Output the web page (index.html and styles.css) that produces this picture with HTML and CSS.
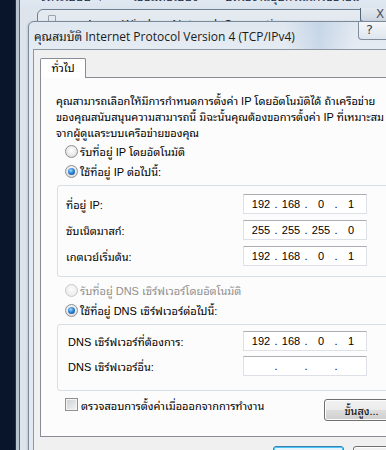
FILE: index.html
```html
<!DOCTYPE html>
<html lang="th">
<head>
<meta charset="utf-8">
<title>คุณสมบัติ Internet Protocol Version 4 (TCP/IPv4)</title>
<link rel="stylesheet" href="styles.css">
</head>
<body>
<div class="desk">
  <div class="explorer">
    <div class="ex-client">
      <div class="toolbar">
        <span class="tb-item tb-org">จัดระเบียบ ▼</span>
        <span class="tb-item tb-connect">เชื่อมต่อไปยัง</span>
        <span class="tb-item tb-disable">ปิดใช้งานอุปกรณ์เครือข่ายนี้</span>
      </div>
    </div>
  </div>

  <div class="wireless">
    <div class="wl-title">
      <span class="wl-icon"></span>
      <span class="wl-dot"></span>
      <span class="wl-net"></span>
      <span class="wl-name">Wireless Network Connection</span>
    </div>
    <div class="wl-close">X</div>
  </div>

  <div class="dialog">
    <div class="dlg-title">
      <span class="dlg-caption">คุณสมบัติ Internet Protocol Version 4 (TCP/IPv4)</span>
      <div class="help">?</div>
    </div>
    <div class="client">
      <div class="tabs"><div class="tab">ทั่วไป</div></div>
      <div class="page">
        <p class="intro">คุณสามารถเลือกให้มีการกำหนดการตั้งค่า IP โดยอัตโนมัติได้ ถ้าเครือข่าย<br>ของคุณสนับสนุนความสามารถนี้ มิฉะนั้นคุณต้องขอการตั้งค่า IP ที่เหมาะสม<br>จากผู้ดูแลระบบเครือข่ายของคุณ</p>

        <div class="opt"><span class="radio"></span><span>รับที่อยู่ IP โดยอัตโนมัติ</span></div>
        <div class="opt"><span class="radio checked"></span><span>ใช้ที่อยู่ IP ต่อไปนี้:</span></div>

        <div class="group group-ip">
          <div class="field-row"><span class="flabel">ที่อยู่ IP:</span>
            <div class="ipbox"><span class="seg">192</span><span class="dot">.</span><span class="seg">168</span><span class="dot">.</span><span class="seg">0</span><span class="dot">.</span><span class="seg">1</span></div></div>
          <div class="field-row"><span class="flabel">ซับเน็ตมาสก์:</span>
            <div class="ipbox"><span class="seg">255</span><span class="dot">.</span><span class="seg">255</span><span class="dot">.</span><span class="seg">255</span><span class="dot">.</span><span class="seg">0</span></div></div>
          <div class="field-row"><span class="flabel">เกตเวย์เริ่มต้น:</span>
            <div class="ipbox"><span class="seg">192</span><span class="dot">.</span><span class="seg">168</span><span class="dot">.</span><span class="seg">0</span><span class="dot">.</span><span class="seg">1</span></div></div>
        </div>

        <div class="opt opt-dns disabled"><span class="radio"></span><span>รับที่อยู่ DNS เซิร์ฟเวอร์โดยอัตโนมัติ</span></div>
        <div class="opt"><span class="radio checked"></span><span>ใช้ที่อยู่ DNS เซิร์ฟเวอร์ต่อไปนี้:</span></div>

        <div class="group group-dns">
          <div class="field-row"><span class="flabel">DNS เซิร์ฟเวอร์ที่ต้องการ:</span>
            <div class="ipbox"><span class="seg">192</span><span class="dot">.</span><span class="seg">168</span><span class="dot">.</span><span class="seg">0</span><span class="dot">.</span><span class="seg">1</span></div></div>
          <div class="field-row"><span class="flabel">DNS เซิร์ฟเวอร์อื่น:</span>
            <div class="ipbox"><span class="seg"></span><span class="dot">.</span><span class="seg"></span><span class="dot">.</span><span class="seg"></span><span class="dot">.</span><span class="seg"></span></div></div>
        </div>

        <div class="bottom-row">
          <label class="check-label"><span class="checkbox"></span><span>ตรวจสอบการตั้งค่าเมื่อออกจากการทำงาน</span></label>
          <button class="btn btn-adv" type="button">ขั้นสูง...</button>
        </div>
      </div>
      <div class="footer">
        <button class="btn btn-ok" type="button">ตกลง</button>
        <button class="btn btn-cancel" type="button">ยกเลิก</button>
      </div>
    </div>
  </div>
</div>
</body>
</html>
```

FILE: styles.css
```css
* { box-sizing: border-box; }

body {
  margin: 0;
  width: 386px;
  height: 450px;
  overflow: hidden;
  background: #0b182c;
  font-family: "Liberation Sans", "Noto Sans Thai Looped", "Noto Sans", sans-serif;
  font-size: 11px;
  color: #000;
}

.desk {
  position: relative;
  width: 386px;
  height: 450px;
  overflow: hidden;
  background: linear-gradient(90deg, #08152a 0%, #0f2039 100%);
}

/* background explorer window */
.explorer {
  position: absolute;
  left: 15px;
  top: -20px;
  width: 440px;
  height: 500px;
  border-left: 1px solid #28323e;
  padding-left: 3px;
  background: linear-gradient(90deg, #b7c3cf, #a3b0be);
}
.ex-client {
  height: 100%;
  border-left: 1px solid #566474;
  background: #dde4eb;
}
.toolbar {
  position: relative;
  height: 29px;
  background: linear-gradient(#e9eff6, #dbe4ee);
  color: #1c2d44;
  font-family: "Noto Sans", "Noto Sans Thai Looped", sans-serif;
  font-size: 12px;
  line-height: 16px;
  white-space: nowrap;
}
.tb-item { position: absolute; top: 9px; }
.tb-org { left: 20px; }
.tb-connect { left: 113px; }
.tb-disable { left: 205px; }

/* Wireless Network Connection window */
.wireless {
  position: absolute;
  left: 37px;
  top: 9px;
  width: 420px;
  height: 120px;
  border: 1px solid #6f7f90;
  border-radius: 6px 0 0 0;
  background: linear-gradient(#e4eaf0, #d7e0ea);
}
.wl-title {
  display: flex;
  align-items: center;
  height: 18px;
  padding-left: 10px;
  margin-top: 2px;
  font-family: "Noto Sans", "Liberation Sans", sans-serif;
  font-size: 12px;
  color: #1e1e1e;
  white-space: nowrap;
}
.wl-icon {
  flex: none;
  width: 8px;
  height: 9px;
  margin-top: -4px;
  border: 1px solid #98a3ae;
  border-radius: 1px;
}
.wl-dot {
  flex: none;
  width: 2px;
  height: 2px;
  margin-left: 33px;
  background: #555;
}
.wl-net {
  flex: none;
  width: 11px;
  height: 3px;
  margin-left: 15px;
  margin-right: 5px;
  margin-top: 4px;
  border-top: 2px solid #2f3f55;
  border-bottom: 1px solid #6a7a8d;
}
.wl-name { margin-top: 6px; }
.wl-close {
  position: absolute;
  left: 322px;
  top: -2px;
  width: 40px;
  height: 14px;
  border: 1px solid #55667a;
  border-top: none;
  border-radius: 0 0 0 3px;
  background: linear-gradient(#e3e9f0, #cdd7e2);
  font-family: "DejaVu Sans", sans-serif;
  font-size: 12px;
  line-height: 13px;
  padding-left: 15px;
  color: #4a5563;
}

/* Dialog */
.dialog {
  position: absolute;
  left: 28px;
  top: 21px;
  width: 430px;
  height: 450px;
  border: 1px solid #7a8a9b;
  border-radius: 6px 6px 0 0;
  background: linear-gradient(180deg, #dfe7f0 0px, #e6ecf2 30px, #e3e8ee 100%);
  box-shadow: -1px 0 2px rgba(0, 0, 0, 0.12);
}
.dlg-title {
  position: relative;
  height: 27px;
  padding-left: 5px;
  display: flex;
  align-items: center;
  background: linear-gradient(90deg, rgba(255,255,255,0) 0, rgba(255,255,255,0) 255px, rgba(150,180,215,0.35) 290px, rgba(255,255,255,0) 325px);
}
.dlg-caption {
  font-family: "Open Sans", "Noto Sans Thai Looped", "Noto Sans", sans-serif;
  font-size: 12px;
  color: #1a1a1a;
  white-space: nowrap;
}
.help {
  position: absolute;
  left: 329px;
  top: 0;
  width: 50px;
  height: 18px;
  border: 1px solid #7f8d9c;
  border-top: none;
  border-radius: 0 0 0 4px;
  background: linear-gradient(#f4f7fa, #dfe6ee);
  font-family: "DejaVu Sans", sans-serif;
  font-size: 13px;
  line-height: 16px;
  padding-left: 7px;
  color: #3d4650;
}

.client {
  margin-left: 4px;
  height: 440px;
  border-left: 1px solid #8c97a3;
  border-top: 1px solid #8c97a3;
  background: #f0f0f0;
}

.tabs {
  display: flex;
  padding: 8px 0 0 6px;
}
.tab {
  position: relative;
  z-index: 1;
  width: 46px;
  height: 20px;
  margin-bottom: -1px;
  border: 1px solid #898c95;
  border-bottom: none;
  border-radius: 2px 2px 0 0;
  background: #fff;
  text-align: center;
  line-height: 19px;
}

.page {
  width: 375px;
  height: 360px;
  margin-left: 6px;
  border: 1px solid #898c95;
  background: #fcfcfc;
  padding: 15px 0 0 15px;
}

.intro {
  margin: 0;
  line-height: 16px;
  white-space: nowrap;
}

.opt {
  display: flex;
  align-items: center;
  height: 20px;
  padding-left: 9px;
  white-space: nowrap;
}
.opt-dns { margin-top: 3px; }
.disabled { color: #8f8f8f; }

.radio {
  flex: none;
  width: 13px;
  height: 13px;
  margin-right: 2px;
  border-radius: 50%;
  border: 1px solid #8f8f8f;
  background: radial-gradient(circle at 50% 40%, #ffffff 0, #eeeeee 45%, #d0d0d0 100%);
  position: relative;
}
.radio.checked::after {
  content: "";
  position: absolute;
  left: 2px;
  top: 2px;
  width: 7px;
  height: 7px;
  border-radius: 50%;
  background: radial-gradient(circle at 40% 35%, #a6d8ff 0, #2d86d6 45%, #0f3f7f 100%);
}
.disabled .radio {
  border-color: #c8c8c8;
  background: radial-gradient(circle at 50% 40%, #fbfbfb 0, #efefef 60%, #e2e2e2 100%);
}

.group {
  width: 342px;
  margin-left: 1px;
  border: 1px solid #d5dfe5;
  border-radius: 3px;
}
.group-ip {
  margin-top: 4px;
  padding: 8px 0 10px 8px;
  display: grid;
  row-gap: 6px;
}
.group-dns {
  margin-top: 4px;
  padding: 6px 0 14px 10px;
  display: grid;
  row-gap: 5px;
}
.field-row {
  display: flex;
  align-items: center;
  height: 20px;
}
.flabel {
  width: 177px;
  white-space: nowrap;
}
.group-dns .flabel { width: 175px; }

.ipbox {
  display: flex;
  width: 124px;
  height: 20px;
  padding-left: 5px;
  border: 1px solid #dde1e7;
  border-top-color: #abadb3;
  background: #fff;
  line-height: 18px;
}
.seg { width: 24px; text-align: center; }
.dot { width: 6px; text-align: center; }

.bottom-row {
  display: flex;
  align-items: flex-start;
  width: 343px;
  margin-top: 7px;
}
.check-label {
  flex: 1;
  display: flex;
  align-items: center;
  height: 13px;
  padding-left: 9px;
  white-space: nowrap;
}
.checkbox {
  flex: none;
  width: 13px;
  height: 13px;
  margin-right: 3px;
  border: 1px solid #8e8f8f;
  background: linear-gradient(135deg, #cbcfd5 0, #f3f3f3 100%);
  box-shadow: inset 0 0 0 1px #f4f4f4;
}

.btn {
  font-family: inherit;
  font-size: 11px;
  color: #000;
  height: 22px;
  border: 1px solid #707070;
  border-radius: 3px;
  background: linear-gradient(#f2f2f2 0, #ebebeb 50%, #dddddd 50%, #cfcfcf 100%);
  box-shadow: inset 0 0 0 1px #fcfcfc;
  padding: 0;
}
.btn-adv {
  width: 75px;
  margin-top: 1px;
}
.footer {
  display: flex;
  gap: 9px;
  padding: 9px 0 0 239px;
}
.btn-ok {
  width: 71px;
  height: 23px;
  border-color: #3c7fb1;
  background: linear-gradient(#eaf6fd 0, #d9f0fc 50%, #bee6fd 50%, #a7d9f5 100%);
  box-shadow: inset 0 0 0 1px #48c4f5;
}
.btn-cancel {
  width: 75px;
  height: 23px;
}
```
